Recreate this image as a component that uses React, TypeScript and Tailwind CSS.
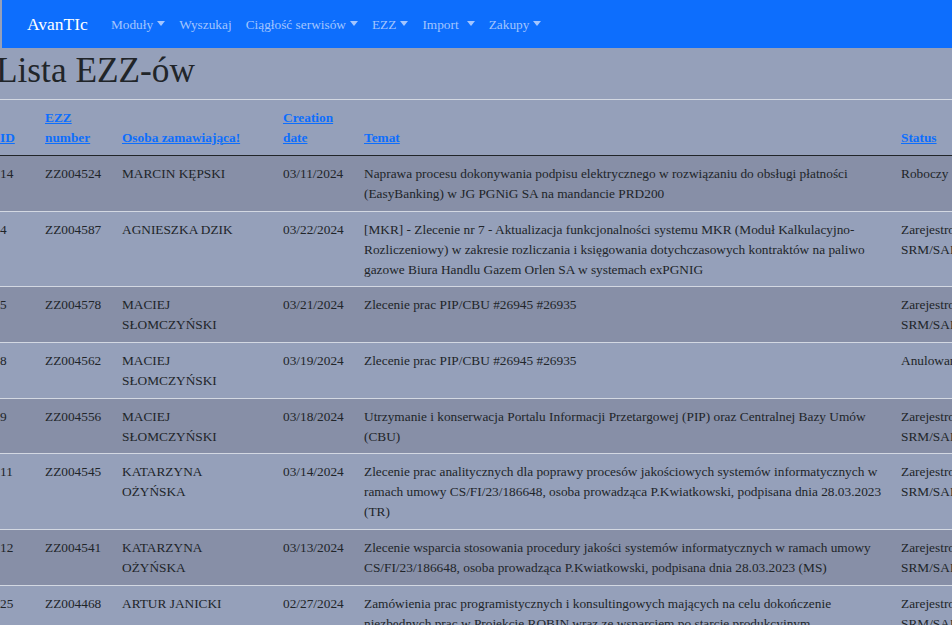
import React from "react";

type Row = {
  id: string;
  num: string;
  person: string[];
  date: string;
  topic: string[];
  status: string[];
};

const rows: Row[] = [
  {
    id: "14",
    num: "ZZ004524",
    person: ["MARCIN KĘPSKI"],
    date: "03/11/2024",
    topic: [
      "Naprawa procesu dokonywania podpisu elektrycznego w rozwiązaniu do obsługi płatności",
      "(EasyBanking) w JG PGNiG SA na mandancie PRD200",
    ],
    status: ["Roboczy"],
  },
  {
    id: "4",
    num: "ZZ004587",
    person: ["AGNIESZKA DZIK"],
    date: "03/22/2024",
    topic: [
      "[MKR] - Zlecenie nr 7 - Aktualizacja funkcjonalności systemu MKR (Moduł Kalkulacyjno-",
      "Rozliczeniowy) w zakresie rozliczania i księgowania dotychczasowych kontraktów na paliwo",
      "gazowe Biura Handlu Gazem Orlen SA w systemach exPGNIG",
    ],
    status: ["Zarejestrowany w", "SRM/SAP"],
  },
  {
    id: "5",
    num: "ZZ004578",
    person: ["MACIEJ", "SŁOMCZYŃSKI"],
    date: "03/21/2024",
    topic: ["Zlecenie prac PIP/CBU #26945 #26935"],
    status: ["Zarejestrowany w", "SRM/SAP"],
  },
  {
    id: "8",
    num: "ZZ004562",
    person: ["MACIEJ", "SŁOMCZYŃSKI"],
    date: "03/19/2024",
    topic: ["Zlecenie prac PIP/CBU #26945 #26935"],
    status: ["Anulowany"],
  },
  {
    id: "9",
    num: "ZZ004556",
    person: ["MACIEJ", "SŁOMCZYŃSKI"],
    date: "03/18/2024",
    topic: [
      "Utrzymanie i konserwacja Portalu Informacji Przetargowej (PIP) oraz Centralnej Bazy Umów",
      "(CBU)",
    ],
    status: ["Zarejestrowany w", "SRM/SAP"],
  },
  {
    id: "11",
    num: "ZZ004545",
    person: ["KATARZYNA", "OŻYŃSKA"],
    date: "03/14/2024",
    topic: [
      "Zlecenie prac analitycznych dla poprawy procesów jakościowych systemów informatycznych w",
      "ramach umowy CS/FI/23/186648, osoba prowadząca P.Kwiatkowski, podpisana dnia 28.03.2023",
      "(TR)",
    ],
    status: ["Zarejestrowany w", "SRM/SAP"],
  },
  {
    id: "12",
    num: "ZZ004541",
    person: ["KATARZYNA", "OŻYŃSKA"],
    date: "03/13/2024",
    topic: [
      "Zlecenie wsparcia stosowania procedury jakości systemów informatycznych w ramach umowy",
      "CS/FI/23/186648, osoba prowadząca P.Kwiatkowski, podpisana dnia 28.03.2023 (MS)",
    ],
    status: ["Zarejestrowany w", "SRM/SAP"],
  },
  {
    id: "25",
    num: "ZZ004468",
    person: ["ARTUR JANICKI"],
    date: "02/27/2024",
    topic: [
      "Zamówienia prac programistycznych i konsultingowych mających na celu dokończenie",
      "niezbędnych prac w Projekcie ROBIN wraz ze wsparciem po starcie produkcyjnym",
    ],
    status: ["Zarejestrowany w", "SRM/SAP"],
  },
];

function Caret() {
  return (
    <span className="inline-block ml-[4px] align-[3px] w-0 h-0 border-t-[5px] border-t-current border-x-[4px] border-x-transparent" />
  );
}

function Lines({ lines }: { lines: string[] }) {
  return (
    <>
      {lines.map((l, i) => (
        <div key={i} className="whitespace-nowrap">
          {l}
        </div>
      ))}
    </>
  );
}

export default function App() {
  const nav: { label: string; caret: boolean; space?: boolean }[] = [
    { label: "Moduły", caret: true },
    { label: "Wyszukaj", caret: false },
    { label: "Ciągłość serwisów", caret: true },
    { label: "EZZ", caret: true },
    { label: "Import", caret: true, space: true },
    { label: "Zakupy", caret: true },
  ];
  return (
    <div className="w-[952px] h-[625px] overflow-hidden bg-[#95a0ba] text-[#212529] font-['Liberation_Serif',serif]">
      <nav className="ml-[2px] h-[48px] bg-[#0d6efd] flex items-center pl-[25px]">
        <span className="text-white text-[17.5px] leading-[24px] mr-[16px]">AvanTIc</span>
        <div className="flex items-center mt-[2px] text-[13.33px] leading-[20px] text-[#a3c5fe]">
          {nav.map((n) => (
            <span key={n.label} className="px-[7px] whitespace-nowrap">
              {n.label}
              {n.caret && (n.space ? <span className="ml-[4px] inline-block"><Caret /></span> : <Caret />)}
            </span>
          ))}
        </div>
      </nav>
      <h1 className="-ml-[4px] mt-[2px] mb-[7px] text-[35.3px] leading-[42px] font-normal">Lista EZZ-ów</h1>
      <table className="-ml-[8px] w-[1080px] table-fixed border-collapse text-[13.33px] leading-[20px]">
        <colgroup>
          <col className="w-[45px]" />
          <col className="w-[77px]" />
          <col className="w-[161px]" />
          <col className="w-[81px]" />
          <col className="w-[537px]" />
          <col className="w-[179px]" />
        </colgroup>
        <thead>
          <tr className="border-t border-[#d3d8e2] border-b border-b-[#212529] align-bottom">
            {[["ID"], ["EZZ", "number"], ["Osoba zamawiająca!"], ["Creation", "date"], ["Temat"], ["Status"]].map(
              (h, i) => (
                <th key={i} className="text-left font-bold px-[8px] py-[7.5px]">
                  {h.map((t, j) => (
                    <div key={j}>
                      <a className="text-[#0d6efd] underline whitespace-nowrap">{t}</a>
                    </div>
                  ))}
                </th>
              )
            )}
          </tr>
        </thead>
        <tbody>
          {rows.map((r, i) => (
            <tr
              key={i}
              className={`align-top border-b border-[#d3d8e2] ${i % 2 === 0 ? "bg-[#878fa7]" : ""}`}
            >
              <td className="px-[8px] pt-[8px] pb-[6.7px]">{r.id}</td>
              <td className="px-[8px] pt-[8px] pb-[6.7px]">{r.num}</td>
              <td className="px-[8px] pt-[8px] pb-[6.7px]">
                <Lines lines={r.person} />
              </td>
              <td className="px-[8px] pt-[8px] pb-[6.7px]">{r.date}</td>
              <td className="px-[8px] pt-[8px] pb-[6.7px]">
                <Lines lines={r.topic} />
              </td>
              <td className="px-[8px] pt-[8px] pb-[6.7px]">
                <Lines lines={r.status} />
              </td>
            </tr>
          ))}
        </tbody>
      </table>
    </div>
  );
}
